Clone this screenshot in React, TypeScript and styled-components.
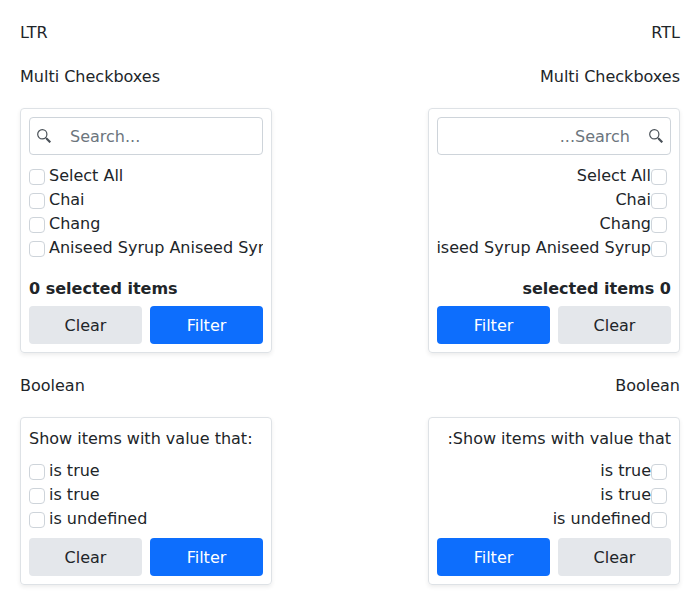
import React from "react";
import styled, { createGlobalStyle } from "styled-components";

const GlobalStyle = createGlobalStyle`
  *, *::before, *::after { box-sizing: border-box; }
  body {
    margin: 0;
    background: #fff;
    color: #212529;
    font: 16px/24px "DejaVu Sans", sans-serif;
  }
`;

const Page = styled.main`
  display: flex;
  justify-content: space-between;
  padding: 20px;
`;

const Column = styled.section`
  width: 252px;
`;

const Heading = styled.p`
  height: 24px;
  margin: 0 0 20px;
  padding-top: 1px;
`;

const Card = styled.div`
  display: flex;
  flex-direction: column;
  margin-bottom: 20px;
  padding: 8px;
  border: 1px solid #dee2e6;
  border-radius: 4px;
  box-shadow: 0 2px 4px rgba(0, 0, 0, 0.075);
`;

const SearchBox = styled.div`
  display: flex;
  align-items: center;
  height: 38px;
  padding: 0 7px;
  border: 1px solid #ced4da;
  border-radius: 4px;
  color: #6c757d;
`;

const SearchIcon = styled.svg`
  flex: none;
  margin-inline-end: 19px;
`;

const Placeholder = styled.span`
  padding-top: 2px;
`;

const List = styled.ul`
  list-style: none;
  margin: 9px 0 0;
  padding: 0;
  overflow: hidden;
`;

const Item = styled.li`
  display: flex;
  align-items: center;
  height: 24px;
  white-space: nowrap;
`;

const Box = styled.span`
  flex: none;
  width: 16px;
  height: 16px;
  margin: 2px 4px 0 0;
  border: 1px solid #ced4da;
  border-radius: 4px;
`;

const Status = styled.div`
  margin: 17px 0 5px;
  font-weight: 700;
`;

const Prompt = styled.div`
  height: 24px;
  padding-top: 1px;
`;

const Actions = styled.div<{ $spaced?: boolean }>`
  display: grid;
  grid-template-columns: 1fr 1fr;
  gap: 8px;
  margin-top: ${(p) => (p.$spaced ? "7px" : "0")};
`;

const Button = styled.button<{ $primary?: boolean }>`
  height: 38px;
  padding: 2px 0 0;
  border: 0;
  border-radius: 4px;
  font: inherit;
  color: ${(p) => (p.$primary ? "#fff" : "#212529")};
  background: ${(p) => (p.$primary ? "#0d6efd" : "#e4e7eb")};
`;

function Options({ items }: { items: string[] }) {
  return (
    <List>
      {items.map((label, i) => (
        <Item key={i}>
          <Box />
          <span>{label}</span>
        </Item>
      ))}
    </List>
  );
}

function Buttons({ spaced }: { spaced?: boolean }) {
  return (
    <Actions $spaced={spaced}>
      <Button>Clear</Button>
      <Button $primary>Filter</Button>
    </Actions>
  );
}

function Filters({ dir, title }: { dir: "ltr" | "rtl"; title: string }) {
  return (
    <Column dir={dir}>
      <Heading>{title}</Heading>
      <Heading>Multi Checkboxes</Heading>
      <Card>
        <SearchBox>
          <SearchIcon width="14" height="14" viewBox="0 0 14 14" fill="none" stroke="#495057">
            <circle cx="5.3" cy="5.3" r="4.6" strokeWidth="1.2" />
            <path d="M8.4 8.4L10 10" strokeWidth="1.2" />
            <path d="M9.5 9.5L13.3 13.3" strokeWidth="2.2" />
          </SearchIcon>
          <Placeholder>Search...</Placeholder>
        </SearchBox>
        <Options items={["Select All", "Chai", "Chang", "Aniseed Syrup Aniseed Syrup"]} />
        <Status>0 selected items</Status>
        <Buttons />
      </Card>
      <Heading>Boolean</Heading>
      <Card>
        <Prompt>Show items with value that:</Prompt>
        <Options items={["is true", "is true", "is undefined"]} />
        <Buttons spaced />
      </Card>
    </Column>
  );
}

export default function App() {
  return (
    <>
      <GlobalStyle />
      <Page>
        <Filters dir="ltr" title="LTR" />
        <Filters dir="rtl" title="RTL" />
      </Page>
    </>
  );
}
